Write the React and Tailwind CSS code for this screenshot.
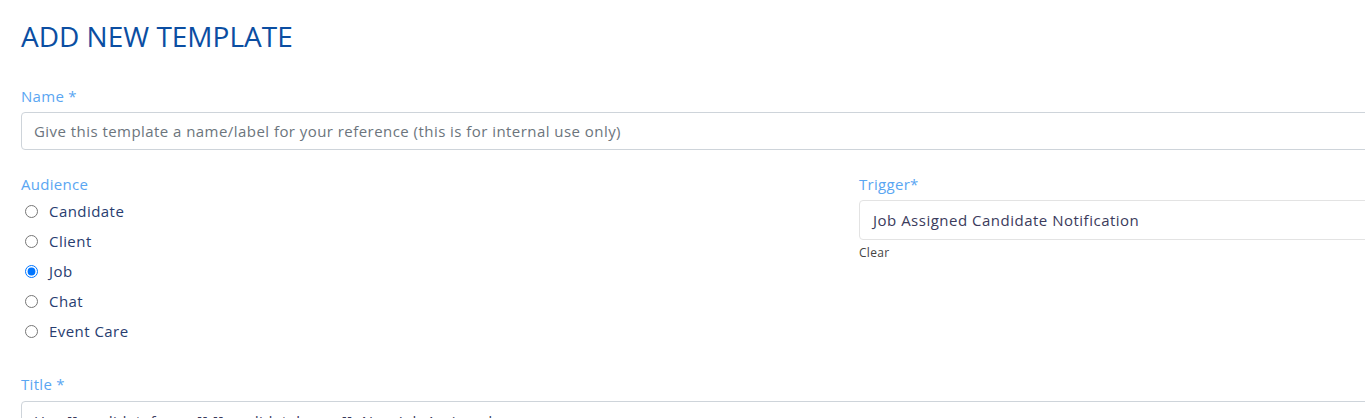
import React, { useState } from "react";

const audiences = ["Candidate", "Client", "Job", "Chat", "Event Care"];

const Label = ({ children }) => (
  <label className="block text-[15px] leading-[20px] tracking-[0.3px] text-[#5aa6f2]">{children}</label>
);

const RadioRow = ({ label, checked, onChange }) => (
  <label className="flex items-center h-[30px] cursor-pointer">
    <input
      type="radio"
      name="audience"
      checked={checked}
      onChange={onChange}
      className="w-[13px] h-[13px] ml-[4px] mr-[11px] accent-[#0075ff]"
    />
    <span className="text-[15px] tracking-[0.45px] text-[#283d70]">{label}</span>
  </label>
);

const App = () => {
  const [audience, setAudience] = useState("Job");

  return (
    <div className="w-[1365px] h-[418px] overflow-hidden bg-white font-['Open_Sans',sans-serif]">
      <div className="w-[1700px] pl-[21px] pt-[20px]">
        <h1 className="text-[28px] leading-[32px] text-[#0b4ea2]">
          ADD NEW TEMPLATE
        </h1>

        <div className="mt-[34px]">
          <Label>Name *</Label>
          <input
            className="mt-[6px] w-full h-[38px] rounded-[4px] border border-[#ced4da] px-[12px] text-[15px] tracking-[0.45px] placeholder-[#6c757d] outline-none"
            placeholder="Give this template a name/label for your reference (this is for internal use only)"
          />
        </div>

        <div className="mt-[24px] flex">
          <div className="w-[838px]">
            <Label>Audience</Label>
            <div className="mt-[2px]">
              {audiences.map((a) => (
                <RadioRow
                  key={a}
                  label={a}
                  checked={audience === a}
                  onChange={() => setAudience(a)}
                />
              ))}
            </div>
          </div>
          <div className="flex-1">
            <Label>Trigger*</Label>
            <div className="mt-[6px] h-[40px] rounded-[4px] border border-[#e3e3e3] flex items-center px-[13px] text-[15px] tracking-[0.5px] text-[#3b3b5c]">
              Job Assigned Candidate Notification
            </div>
            <div className="mt-[4px] text-[12px] tracking-[0.3px] text-[#444]">Clear</div>
          </div>
        </div>

        <div className="mt-[28px]">
          <Label>Title *</Label>
          <div className="mt-[7px] h-[38px] rounded-[4px] border border-[#ced4da] px-[12px] pt-[8px] text-[15px] tracking-[0.45px] text-[#3b3b5c]">
            Hey [[candidatefname]] [[candidatelname]], New Job Assigned
          </div>
        </div>
      </div>
    </div>
  );
};

export default App;
